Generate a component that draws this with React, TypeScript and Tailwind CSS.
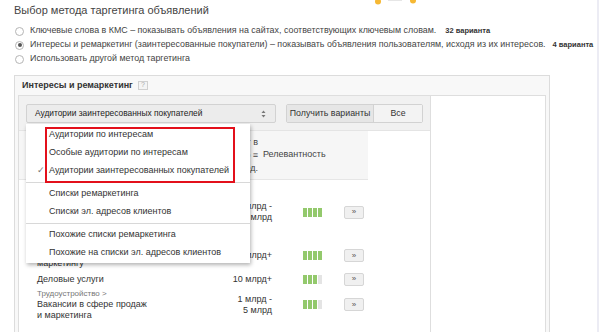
import React from "react";

type Row = {
  cat?: string;
  name: string[];
  reach: string[];
  level: number;
  h: string;
};

// первые строки таблицы закрыты выпадающим меню, видны только их хвосты
const rows: Row[] = [
  { name: [], reach: ["1 млрд -", "5 млрд"], level: 4, h: "h-[64px]" },
  { name: ["маркетингу"], reach: ["10 млрд+"], level: 4, h: "h-[23px]" },
  { name: ["Деловые услуги"], reach: ["10 млрд+"], level: 3, h: "h-[24px]" },
  { cat: "Трудоустройство >", name: ["Вакансии в сфере продаж", "и маркетинга"], reach: ["1 млрд -", "5 млрд"], level: 3, h: "h-[27px]" },
];

const menu = [
  ["Аудитории по интересам", "Особые аудитории по интересам", "Аудитории заинтересованных покупателей"],
  ["Списки ремаркетинга", "Списки эл. адресов клиентов"],
  ["Похожие списки ремаркетинга", "Похожие на списки эл. адресов клиентов"],
];

function Radio({ checked }: { checked?: boolean }) {
  return (
    <span className="flex h-[9px] w-[9px] shrink-0 items-center justify-center rounded-full border border-[#b5b5b5] bg-white">
      {checked && <span className="h-[4px] w-[4px] rounded-full bg-[#555]" />}
    </span>
  );
}

function Bars({ level }: { level: number }) {
  return (
    <div className="flex gap-[1px]">
      {[0, 1, 2, 3].map((i) => (
        <span key={i} className={i < level ? "h-[9px] w-[4px] bg-[#93c96c]" : "h-[9px] w-[4px] bg-[#e4e4e4]"} />
      ))}
    </div>
  );
}

export default function App() {
  return (
    <div className="relative flex h-[332px] w-[600px] overflow-hidden bg-white font-['Liberation_Sans',Arial,sans-serif] text-[#444]">
      <svg className="absolute left-[372px] top-0" width="48" height="6" viewBox="0 0 48 6">
        <circle cx="6" cy="1.5" r="3" fill="#f6b833" />
        <circle cx="41" cy="0.5" r="3" fill="#f6b833" />
        <path d="M16 0.5 H30" stroke="#e6e6e6" strokeWidth="1" />
      </svg>

      <div className="flex-1 pl-[14px] pt-[4px]">
        <div className="text-[11px] leading-[13px] text-[#444]">Выбор метода таргетинга объявлений</div>

        <div className="mt-[7px] whitespace-nowrap text-[8.9px] text-[#444]">
          <div className="flex h-[14px] items-center gap-[6px] pl-[1px]">
            <Radio />
            <span>Ключевые слова в КМС – показывать объявления на сайтах, соответствующих ключевым словам.</span>
            <span className="ml-[3px] text-[7.5px] font-bold text-[#333]">32 варианта</span>
          </div>
          <div className="flex h-[14px] items-center gap-[6px] pl-[1px]">
            <Radio checked />
            <span>Интересы и ремаркетинг (заинтересованные покупатели) – показывать объявления пользователям, исходя из их интересов.</span>
            <span className="ml-[1px] text-[7.5px] font-bold text-[#333]">4 варианта</span>
          </div>
          <div className="flex h-[14px] items-center gap-[6px] pl-[1px]">
            <Radio />
            <span>Использовать другой метод таргетинга</span>
          </div>
        </div>

        <div className="mt-[9px] w-[536px] border border-[#dcdcdc] bg-[#f8f8f8]">
          <div className="flex h-[19px] items-center gap-[5px] pl-[7px] text-[9px] font-bold text-[#333]">
            <span>Интересы и ремаркетинг</span>
            <span className="flex h-[9px] w-[10px] items-center justify-center border border-[#d0d0d0] bg-[#f4f4f4] text-[7px] font-normal text-[#aaa]">?</span>
          </div>
          <div className="px-[3px]">
            <div className="flex h-[240px] border border-[#dedede] bg-white">
              <div className="w-[412px] border-r border-[#dedede]">
                <div className="flex h-[35px] gap-[10px] border-b border-[#e4e4e4] bg-[#f1f1f1] pl-[7px] pt-[8px]">
                  <div className="relative">
                    <div className="flex h-[19px] w-[250px] items-center justify-between rounded-[2px] border border-[#d2d2d2] bg-[#ececec] pl-[8px] pr-[9px] text-[8.4px] text-[#222]">
                      <span>Аудитории заинтересованных покупателей</span>
                      <svg width="5" height="8" viewBox="0 0 5 8">
                        <path d="M2.5 0.5 L4.5 3 H0.5 Z" fill="#777" />
                        <path d="M2.5 7.5 L4.5 5 H0.5 Z" fill="#777" />
                      </svg>
                    </div>

                    <div className="absolute left-0 top-[20px] z-10 w-[224px] bg-white pb-[1px] pt-[2px] text-[9px] text-[#333] shadow-[1px_2px_4px_rgba(0,0,0,0.3)]">
                      {menu.map((group, gi) => (
                        <div key={gi}>
                          {gi > 0 && <div className="my-[2px] h-[1px] bg-[#d8d8d8]" />}
                          {group.map((item) => (
                            <div key={item} className="relative flex h-[18px] items-center pl-[23px]">
                              {item === "Аудитории заинтересованных покупателей" && (
                                <span className="absolute left-[11px] text-[9px] text-[#777]">✓</span>
                              )}
                              {item}
                            </div>
                          ))}
                        </div>
                      ))}
                      <div className="absolute left-[19px] top-[3px] h-[56px] w-[190px] border-2 border-[#e3101b]" />
                    </div>
                  </div>
                  <div className="flex h-[19px] rounded-[2px] border border-[#d2d2d2] text-[8.8px] text-[#333]">
                    <span className="flex w-[87px] items-center justify-center border-r border-[#d2d2d2] bg-[#e6e6e6]">Получить варианты</span>
                    <span className="flex w-[48px] items-center justify-center bg-[#f3f3f3]">Все</span>
                  </div>
                </div>

                <div className="w-[349px]">
                  <div className="flex h-[49px] items-center border-b border-[#e6e6e6] bg-[#f6f6f6] text-[9px] text-[#444]">
                    <div className="w-[239px] text-right leading-[13px]">
                      <div>Охват в</div>
                      <div>неделю ≡</div>
                      <div>в сред.</div>
                    </div>
                    <span className="ml-[5px]">Релевантность</span>
                  </div>

                  {rows.map((r, i) => (
                    <div key={i} className={`flex items-center text-[9px] text-[#333] ${r.h}`}>
                      <div className="w-[163px] pl-[18px] leading-[10.5px]">
                        {r.cat && <div className="text-[8px] text-[#777]">{r.cat}</div>}
                        {r.name.map((n) => (
                          <div key={n} className={i === 1 ? "pt-[16px]" : ""}>{n}</div>
                        ))}
                      </div>
                      <div className="w-[90px] text-right leading-[11px]">
                        {r.reach.map((t) => (
                          <div key={t}>{t}</div>
                        ))}
                      </div>
                      <div className="ml-[31px]">
                        <Bars level={r.level} />
                      </div>
                      <div className="ml-[22px] flex h-[13px] w-[20px] items-center justify-center rounded-[2px] border border-[#d6d6d6] bg-[#f0f0f0] text-[8px] text-[#555]">
                        »
                      </div>
                    </div>
                  ))}
                </div>
              </div>
              <div className="flex-1" />
            </div>
          </div>
        </div>
      </div>

      <div className="mr-[1px] w-[2px] bg-[#ececf4]" />
    </div>
  );
}
